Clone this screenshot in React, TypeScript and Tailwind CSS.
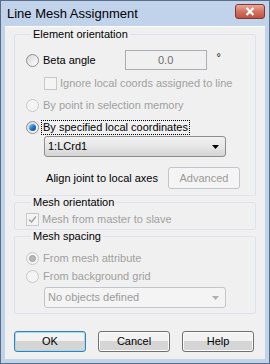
import React from "react";

const font = "font-['Tahoma','Liberation_Sans',sans-serif]";

function RadioDot({ checked, disabled }: { checked?: boolean; disabled?: boolean }) {
  return (
    <span
      className={`w-[13px] h-[13px] rounded-full border flex items-center justify-center shrink-0 ${
        disabled
          ? "border-[#c7c8c9] bg-[#f4f4f4]"
          : "border-[#8e8f8f] bg-gradient-to-br from-[#d6d6d6] to-[#ffffff]"
      }`}
    >
      {checked && (
        <span
          className={`w-[7px] h-[7px] rounded-full ${
            disabled
              ? "bg-[#b8b8b8] border border-[#9f9f9f]"
              : "bg-gradient-to-br from-[#8fd0ff] via-[#1f7fd4] to-[#0a3d7a]"
          }`}
        />
      )}
    </span>
  );
}

function Radio({
  label,
  checked,
  disabled,
  focus,
}: {
  label: string;
  checked?: boolean;
  disabled?: boolean;
  focus?: boolean;
}) {
  return (
    <div className="flex items-center h-[14px] gap-[2px]">
      <RadioDot checked={checked} disabled={disabled} />
      <span
        className={`px-[1px] leading-[13px] ${
          focus ? "border border-dotted border-black" : "border border-transparent"
        } ${disabled ? "text-[#a0a0a0]" : "text-black"}`}
      >
        {label}
      </span>
    </div>
  );
}

function Check({ label, checked, disabled }: { label: string; checked?: boolean; disabled?: boolean }) {
  return (
    <div className="flex items-center h-[14px] gap-[3px]">
      <span
        className={`w-[13px] h-[13px] border flex items-center justify-center shrink-0 ${
          disabled ? "border-[#c7c8c9] bg-[#f4f4f4]" : "border-[#8e8f8f] bg-white"
        }`}
      >
        {checked && (
          <svg width="9" height="9" viewBox="0 0 9 9">
            <path d="M1 4.5 L3.5 7 L8 1.5" fill="none" stroke="#a8a8a8" strokeWidth="1.6" />
          </svg>
        )}
      </span>
      <span className={disabled ? "text-[#a0a0a0]" : "text-black"}>{label}</span>
    </div>
  );
}

function Combo({ text, disabled }: { text: string; disabled?: boolean }) {
  return (
    <div
      className={`ml-[18px] w-[182px] h-[21px] rounded-[3px] border flex items-center justify-between pl-[3px] pr-[6px] ${
        disabled
          ? "border-[#c2c5c9] bg-[#f4f4f4] text-[#9a9a9a]"
          : "border-[#8d8d8d] bg-gradient-to-b from-[#f2f2f2] via-[#e6e6e6] to-[#d4d4d4] text-black"
      }`}
    >
      <span>{text}</span>
      <svg width="7" height="4" viewBox="0 0 7 4">
        <path d="M0 0 H7 L3.5 4 Z" fill={disabled ? "#b0b0b0" : "#000"} />
      </svg>
    </div>
  );
}

function Group({ title, children, className }: { title: string; children: React.ReactNode; className?: string }) {
  return (
    <fieldset className={`border border-[#dde3ea] rounded-[2px] w-[242px] px-[11px] ${className ?? ""}`}>
      <legend className="ml-[5px] px-[2px] leading-[13px] text-black">{title}</legend>
      {children}
    </fieldset>
  );
}

function Button({ label, primary }: { label: string; primary?: boolean }) {
  return (
    <div
      className={`w-[72px] h-[21px] rounded-[3px] border flex items-center justify-center text-black ${
        primary
          ? "border-[#3c7fb1] shadow-[inset_0_0_0_1px_#9fdcf8]"
          : "border-[#707070] shadow-[inset_0_0_0_1px_#fbfbfb]"
      } bg-gradient-to-b from-[#f2f2f2] from-50% to-[#d5d5d5] to-50%`}
    >
      {label}
    </div>
  );
}

export default function App() {
  return (
    <div className={`w-[270px] h-[364px] bg-[#c1d3eb] border border-[#5a6e88] flex flex-col text-[11px] ${font}`}>
      {/* title bar */}
      <div className="h-[25px] flex items-start justify-between pl-[6px] pr-[4px] shrink-0">
        <span className="mt-[5px] text-[13px] leading-[16px] text-black font-['Liberation_Sans',sans-serif]">
          Line Mesh Assignment
        </span>
        <div className="mt-[3px] w-[30px] h-[15px] rounded-[3px] border border-[#7d3a33] bg-gradient-to-b from-[#e8a89c] via-[#d3735f] to-[#c05040] flex items-center justify-center">
          <svg width="10" height="9" viewBox="0 0 10 9">
            <path d="M1.5 1 L8.5 8 M8.5 1 L1.5 8" stroke="#ffffff" strokeWidth="2.2" />
          </svg>
        </div>
      </div>

      {/* body */}
      <div className="flex-1 mx-[4px] mb-[4px] bg-[#f0f0f0] border-t border-[#ffffff] pl-[9px] pt-[1px] flex flex-col">
        <Group title="Element orientation" className="pb-[6px]">
          <div className="mt-[9px] h-[20px] flex items-center">
            <Radio label="Beta angle" />
            <div className="ml-[27px] w-[82px] h-[20px] border border-[#abadb3] bg-[#f0f0f0] flex items-center justify-center text-[#6d6d6d]">
              0.0
            </div>
            <span className="ml-[10px] -mt-[6px]">°</span>
          </div>
          <div className="mt-[6px] ml-[18px]">
            <Check label="Ignore local coords assigned to line" disabled />
          </div>
          <div className="mt-[8px]">
            <Radio label="By point in selection memory" disabled />
          </div>
          <div className="mt-[8px]">
            <Radio label="By specified local coordinates" checked focus />
          </div>
          <div className="mt-[2px]">
            <Combo text="1:LCrd1" />
          </div>
          <div className="mt-[10px] h-[22px] flex items-center justify-end pr-[4px] gap-[10px]">
            <span>Align joint to local axes</span>
            <div className="w-[72px] h-[22px] rounded-[3px] border border-[#c2c5c9] bg-[#f4f4f4] flex items-center justify-center text-[#9a9a9a]">
              Advanced
            </div>
          </div>
        </Group>

        <Group title="Mesh orientation" className="pb-[3px]">
          <div className="mt-[3px]">
            <Check label="Mesh from master to slave" checked disabled />
          </div>
        </Group>

        <Group title="Mesh spacing" className="pb-[5px]">
          <div className="mt-[8px]">
            <Radio label="From mesh attribute" checked disabled />
          </div>
          <div className="mt-[4px]">
            <Radio label="From background grid" disabled />
          </div>
          <div className="mt-[4px]">
            <Combo text="No objects defined" disabled />
          </div>
        </Group>

        <div className="mt-[17px] flex gap-[12px]">
          <Button label="OK" primary />
          <Button label="Cancel" />
          <Button label="Help" />
        </div>
      </div>
    </div>
  );
}
